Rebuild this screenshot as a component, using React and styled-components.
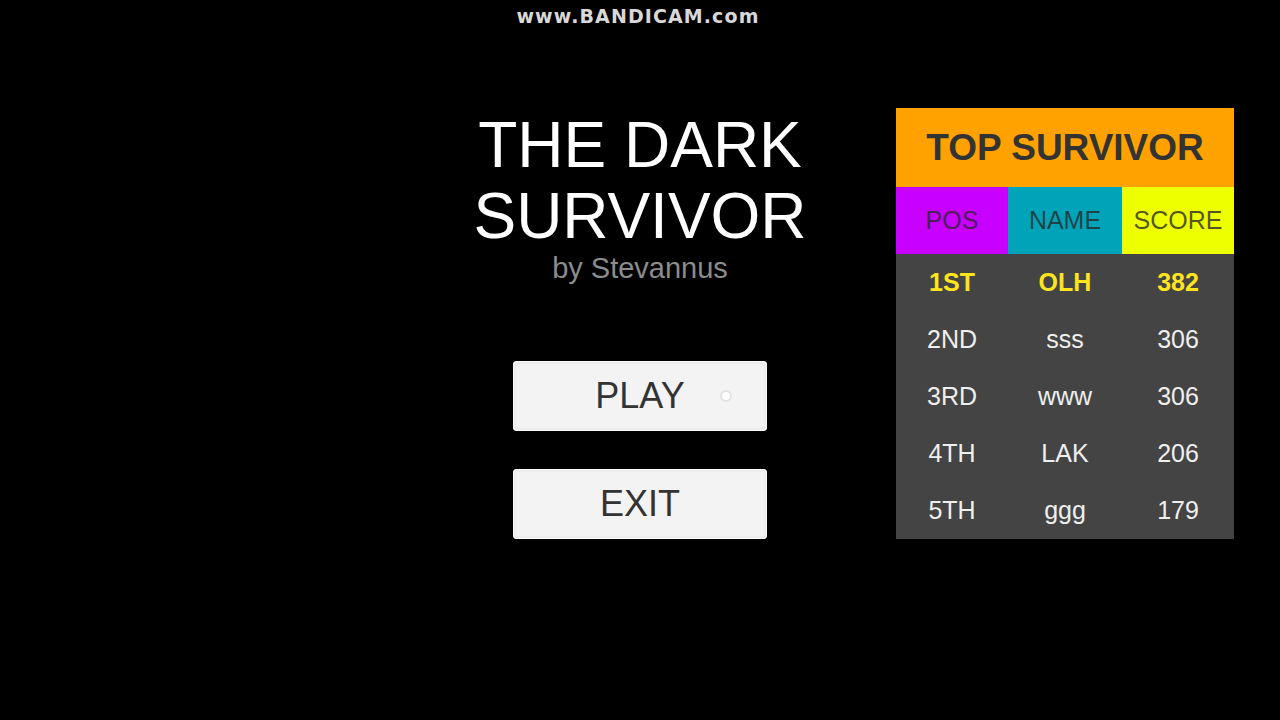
import React from 'react';
import styled, { createGlobalStyle } from 'styled-components';

const GlobalStyle = createGlobalStyle`
  html, body {
    margin: 0;
    padding: 0;
    background: #000;
  }
  body {
    font-family: "Liberation Sans", Arial, sans-serif;
  }
`;

const scores = [
  { pos: '1ST', name: 'OLH', score: 382 },
  { pos: '2ND', name: 'sss', score: 306 },
  { pos: '3RD', name: 'www', score: 306 },
  { pos: '4TH', name: 'LAK', score: 206 },
  { pos: '5TH', name: 'ggg', score: 179 },
];

function App() {
  return (
    <Screen>
      <GlobalStyle />
      <Watermark>www.BANDICAM.com</Watermark>
      <Main>
        <Spacer />
        <Menu>
          <Title>THE DARK<br />SURVIVOR</Title>
          <Author>by Stevannus</Author>
          <Buttons>
            <MenuButton>
              PLAY
              <CursorRing />
            </MenuButton>
            <MenuButton>EXIT</MenuButton>
          </Buttons>
        </Menu>
        <Side>
          <Board>
            <BoardTitle>TOP SURVIVOR</BoardTitle>
            <HeaderRow>
              <HeaderCell $bg="#c800ff">POS</HeaderCell>
              <HeaderCell $bg="#00a3b8">NAME</HeaderCell>
              <HeaderCell $bg="#eeff00">SCORE</HeaderCell>
            </HeaderRow>
            <Rows>
              {scores.map((s, i) => (
                <Row key={s.pos} $top={i === 0}>
                  <Cell>{s.pos}</Cell>
                  <Cell>{s.name}</Cell>
                  <Cell>{s.score}</Cell>
                </Row>
              ))}
            </Rows>
          </Board>
        </Side>
      </Main>
    </Screen>
  );
}

export default App;

// Styled components
const Screen = styled.div`
  position: relative;
  width: 1280px;
  height: 720px;
  background: #000;
  overflow: hidden;
`;

const Watermark = styled.div`
  position: absolute;
  top: 7px;
  left: 0;
  right: 0;
  text-align: center;
  padding-right: 4px;
  font-family: "DejaVu Sans", sans-serif;
  font-weight: bold;
  font-size: 19px;
  line-height: 19px;
  letter-spacing: 1.1px;
  color: #d8d8d8;
`;

const Main = styled.div`
  display: grid;
  grid-template-columns: 440px 400px 440px;
  padding-top: 108px;
`;

const Spacer = styled.div``;

const Menu = styled.div`
  display: flex;
  flex-direction: column;
  align-items: center;
  padding-top: 2px;
`;

const Title = styled.h1`
  margin: 0;
  font-weight: normal;
  font-size: 64px;
  line-height: 71px;
  color: #fff;
  text-align: center;
`;

const Author = styled.div`
  margin-top: 0;
  font-size: 29px;
  line-height: 33px;
  color: #8c8c8c;
`;

const Buttons = styled.div`
  display: flex;
  flex-direction: column;
  gap: 38px;
  margin-top: 76px;
`;

const MenuButton = styled.div`
  position: relative;
  width: 254px;
  height: 70px;
  box-sizing: border-box;
  display: flex;
  align-items: center;
  justify-content: center;
  background: #f3f3f3;
  border: 1px solid #fbfbfb;
  border-radius: 3px;
  box-shadow: inset 0 0 0 2px #ededed;
  font-size: 36px;
  color: #333;
`;

const CursorRing = styled.span`
  position: absolute;
  left: 206px;
  top: 28px;
  width: 8px;
  height: 8px;
  border: 2px solid #e2e2e2;
  border-radius: 50%;
  background: #fff;
`;

const Side = styled.div`
  padding-left: 56px;
`;

const Board = styled.div`
  width: 338px;
  display: flex;
  flex-direction: column;
`;

const BoardTitle = styled.div`
  height: 79px;
  display: flex;
  align-items: center;
  justify-content: center;
  background: #ffa200;
  font-weight: bold;
  font-size: 37px;
  color: #333;
`;

const HeaderRow = styled.div`
  display: grid;
  grid-template-columns: 112px 114px 112px;
  height: 67px;
`;

const HeaderCell = styled.div`
  display: flex;
  align-items: center;
  justify-content: center;
  background: ${(p) => p.$bg};
  font-size: 25px;
  color: rgba(40, 40, 40, 0.78);
`;

const Rows = styled.div`
  background: #444;
  display: flex;
  flex-direction: column;
`;

const Row = styled.div`
  display: grid;
  grid-template-columns: 112px 114px 112px;
  height: 57px;
  font-size: 25px;
  font-weight: ${(p) => (p.$top ? 'bold' : 'normal')};
  color: ${(p) => (p.$top ? '#ffe41e' : '#efefef')};
`;

const Cell = styled.div`
  display: flex;
  align-items: center;
  justify-content: center;
`;
